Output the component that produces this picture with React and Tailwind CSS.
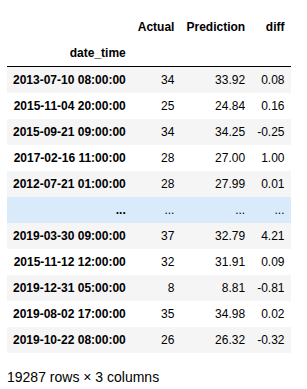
import React from "react";

const rows = [
  ["2013-07-10 08:00:00", "34", "33.92", "0.08"],
  ["2015-11-04 20:00:00", "25", "24.84", "0.16"],
  ["2015-09-21 09:00:00", "34", "34.25", "-0.25"],
  ["2017-02-16 11:00:00", "28", "27.00", "1.00"],
  ["2012-07-21 01:00:00", "28", "27.99", "0.01"],
  ["...", "...", "...", "..."],
  ["2019-03-30 09:00:00", "37", "32.79", "4.21"],
  ["2015-11-12 12:00:00", "32", "31.91", "0.09"],
  ["2019-12-31 05:00:00", "8", "8.81", "-0.81"],
  ["2019-08-02 17:00:00", "35", "34.98", "0.02"],
  ["2019-10-22 08:00:00", "26", "26.32", "-0.32"],
];

export default function App() {
  return (
    <div
      className="w-[307px] h-[389px] bg-white text-black pt-[14px] pl-[7px]"
      style={{ fontFamily: '"Liberation Sans", Arial, sans-serif' }}
    >
      <table className="border-collapse text-[12px] leading-[14px]">
        <thead className="border-b border-black">
          <tr>
            <th className="h-[26px] px-[6px] py-[6px] text-right font-bold"></th>
            <th className="h-[26px] px-[6px] py-[6px] text-right font-bold">Actual</th>
            <th className="h-[26px] px-[6px] py-[6px] text-right font-bold">Prediction</th>
            <th className="h-[26px] px-[6px] py-[6px] text-right font-bold">diff</th>
          </tr>
          <tr>
            <th className="h-[26px] px-[6px] py-[6px] text-right font-bold">date_time</th>
            <th className="h-[26px] px-[6px] py-[6px]"></th>
            <th className="h-[26px] px-[6px] py-[6px]"></th>
            <th className="h-[26px] px-[6px] py-[6px]"></th>
          </tr>
        </thead>
        <tbody>
          {rows.map((r, i) => {
            const bg =
              i === 5 ? "bg-[#d9ebfb]" : i % 2 === 0 ? "bg-[#f5f5f5]" : "bg-white";
            return (
              <tr key={i} className={bg}>
                <th className="h-[26px] px-[6px] py-[6px] text-right font-bold whitespace-nowrap">
                  {r[0]}
                </th>
                <td className="h-[26px] px-[6px] py-[6px] text-right">{r[1]}</td>
                <td className="h-[26px] px-[6px] py-[6px] text-right">{r[2]}</td>
                <td className="h-[26px] px-[6px] py-[6px] text-right">{r[3]}</td>
              </tr>
            );
          })}
        </tbody>
      </table>
      <p className="mt-[16px] text-[14px] leading-[16px]">19287 rows × 3 columns</p>
    </div>
  );
}
